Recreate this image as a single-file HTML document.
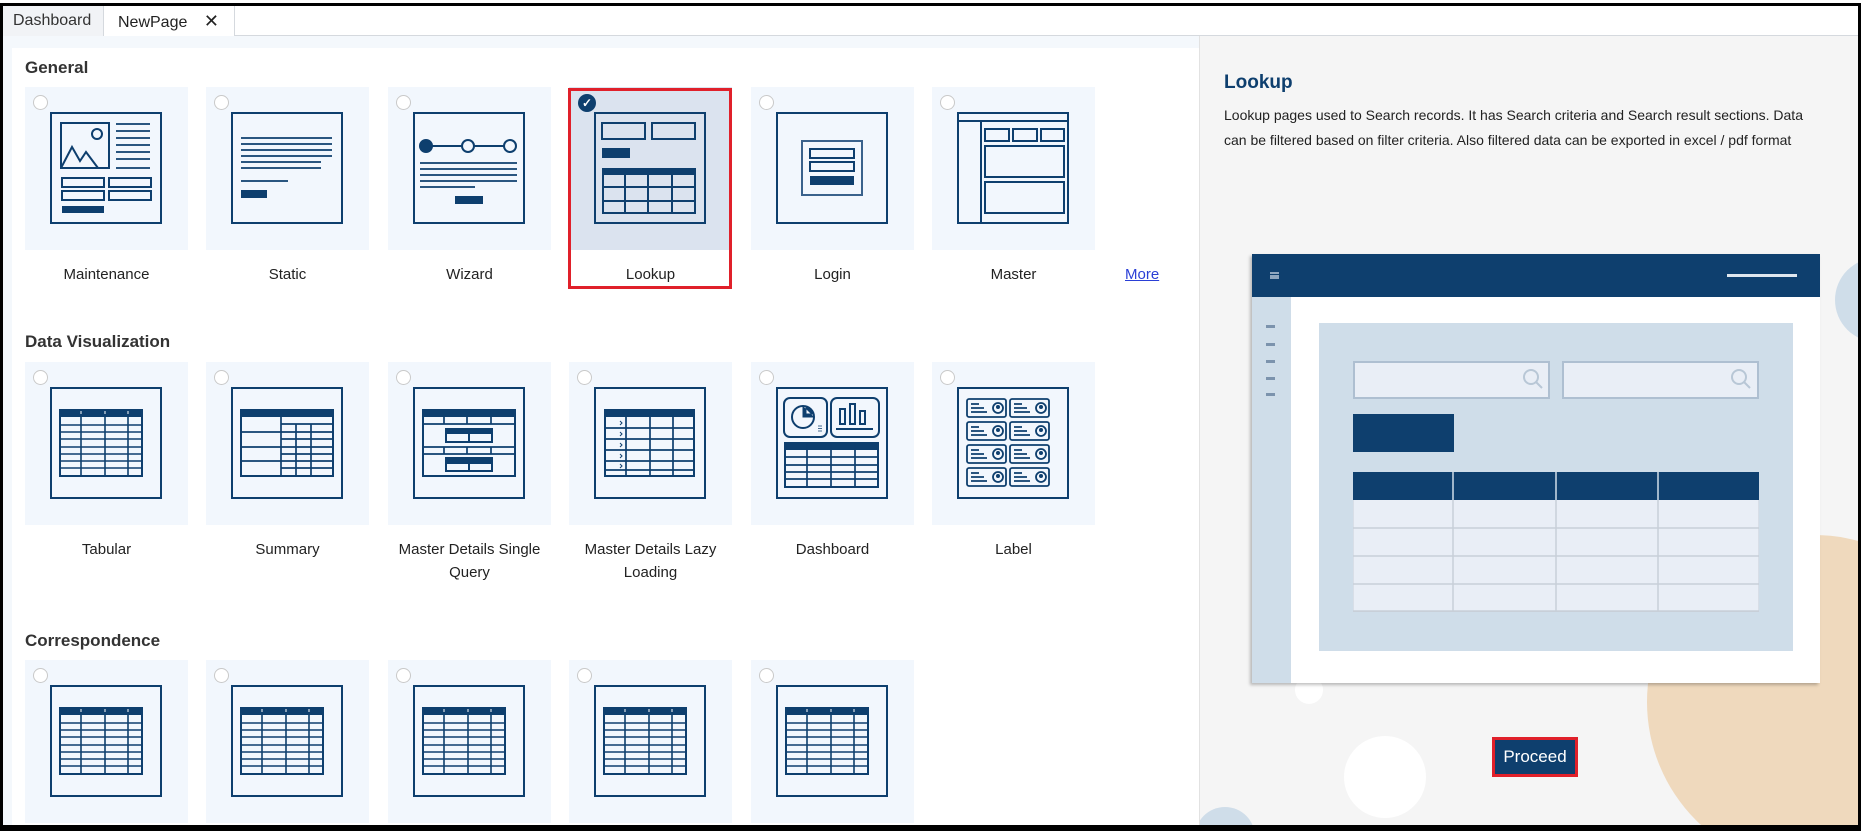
<!DOCTYPE html>
<html><head><meta charset="utf-8"><style>
*{box-sizing:border-box;margin:0;padding:0}
body{width:1861px;height:831px;overflow:hidden;background:#fff;font-family:"Liberation Sans",Arial,sans-serif;position:relative}
.frame{position:absolute;left:0;top:3px;width:1861px;height:828px;border:3px solid #000;border-bottom-width:6px}
.tabbar{position:absolute;left:3px;top:6px;width:1855px;height:30px;border-bottom:1px solid #d5d9de;background:#fff}
.tab{position:absolute;top:0;height:30px;font-size:16px;line-height:30px;color:#333}
.lp{position:absolute;left:3px;top:36px;width:1196px;height:789px;background:#f4f8fc}
.lpi{position:absolute;left:9px;top:12px;width:1187px;height:777px;background:#fff}
h3{position:absolute;left:25px;font-size:17px;font-weight:bold;color:#333}
.card{position:absolute;width:163px;height:163px;background:#f2f7fd}
.card.sel{background:#dbe3ef}
.card svg.ic{position:absolute;left:25px;top:25px}
.radio{position:absolute;left:8px;top:8px;width:15px;height:15px;border-radius:50%;border:1px solid #c9c9c9;background:#fff}
.lbl{position:absolute;width:163px;text-align:center;font-size:15px;color:#222;line-height:23px}
.rp{position:absolute;left:1199px;top:36px;width:659px;height:789px;background:#f5f5f5;border-left:1px solid #e2e2e2;overflow:hidden}
.circ{position:absolute;border-radius:50%}
</style></head><body>
<svg width="0" height="0" style="position:absolute">
<defs>
<symbol id="tab" viewBox="0 0 112 112">
<rect x="1" y="1" width="110" height="110" fill="none" stroke="#0e3f6e" stroke-width="2"/>
<rect x="10" y="23" width="82" height="66" fill="none" stroke="#0e3f6e" stroke-width="2"/>
<rect x="10" y="23" width="82" height="7" fill="#0e3f6e"/>
<g stroke="#0e3f6e" stroke-width="1.6"><path d="M31 23V89M55 23V89M78 23V89M10 38H92M10 45H92M10 52H92M10 60H92M10 67H92M10 74H92M10 81H92"/></g>
<path d="M31 24v3M55 24v3M78 24v3" stroke="#fff" stroke-width="1"/>
</symbol>
</defs></svg>

<div class="frame"></div>
<div class="tabbar">
 <div class="tab" style="left:0;width:101px;background:#f1f3f6;border-right:1px solid #d5d9de;padding-left:10px">Dashboard</div>
 <div class="tab" style="left:101px;width:131px;background:#fff;border-right:1px solid #d5d9de;padding-left:14px;color:#222">NewPage <span style="margin-left:12px;font-size:18px">✕</span></div>
</div>
<div class="lp"><div class="lpi"></div></div>

<h3 style="top:58px">General</h3>
<h3 style="top:332px">Data Visualization</h3>
<h3 style="top:631px">Correspondence</h3>

<!-- General row -->
<div class="card" style="left:25px;top:87px"><div class="radio"></div>
<svg class="ic" width="112" height="112" viewBox="0 0 112 112" fill="none" stroke="#0e3f6e" stroke-width="2">
<rect x="1" y="1" width="110" height="110"/><rect x="11" y="11" width="48" height="45"/>
<path d="M11 56L22 35L30 49L36 40L48 56"/><circle cx="47" cy="22" r="5"/>
<path d="M66 12H100M66 19H100M66 26H100M66 33H100M66 40H100M66 47H100M66 56H100" stroke-width="1.8"/>
<rect x="12" y="66" width="42" height="9"/><rect x="59" y="66" width="42" height="9"/><rect x="12" y="79" width="42" height="9"/><rect x="59" y="79" width="42" height="9"/>
<rect x="12" y="94" width="42" height="7" fill="#0e3f6e" stroke="none"/></svg></div>
<div class="lbl" style="left:25px;top:263px">Maintenance</div>

<div class="card" style="left:206px;top:87px"><div class="radio"></div>
<svg class="ic" width="112" height="112" viewBox="0 0 112 112" fill="none" stroke="#0e3f6e" stroke-width="2">
<rect x="1" y="1" width="110" height="110"/>
<path d="M10 26H101M10 32H101M10 38H101M10 44H101M10 50H90M10 56H90M10 69H57" stroke-width="1.8"/>
<rect x="10" y="78" width="26" height="8" fill="#0e3f6e" stroke="none"/></svg></div>
<div class="lbl" style="left:206px;top:263px">Static</div>

<div class="card" style="left:388px;top:87px"><div class="radio"></div>
<svg class="ic" width="112" height="112" viewBox="0 0 112 112" fill="none" stroke="#0e3f6e" stroke-width="2">
<rect x="1" y="1" width="110" height="110"/>
<path d="M19 34H49M61 34H91"/><circle cx="13" cy="34" r="6" fill="#0e3f6e"/><circle cx="55" cy="34" r="6"/><circle cx="97" cy="34" r="6"/>
<path d="M7 51H104M7 57H104M7 63H104M7 69H104M7 75H62" stroke-width="1.8"/>
<rect x="42" y="84" width="28" height="8" fill="#0e3f6e" stroke="none"/></svg></div>
<div class="lbl" style="left:388px;top:263px">Wizard</div>

<div class="card sel" style="left:569px;top:87px">
<div style="position:absolute;left:9px;top:7px;width:18px;height:18px;border-radius:50%;background:#0e3f6e;color:#fff;font-size:12px;line-height:18px;text-align:center;font-weight:bold">✓</div>
<svg class="ic" width="112" height="112" viewBox="0 0 112 112" fill="none" stroke="#0e3f6e" stroke-width="2">
<rect x="1" y="1" width="110" height="110"/><rect x="8" y="11" width="43" height="16"/><rect x="58" y="11" width="43" height="16"/>
<rect x="8" y="36" width="28" height="10" fill="#0e3f6e" stroke="none"/>
<rect x="9" y="57" width="92" height="44"/><rect x="9" y="56" width="92" height="7" fill="#0e3f6e" stroke="none"/>
<path d="M31 56V101M54 56V101M78 56V101M9 75H101M9 89H101"/></svg></div>
<div style="position:absolute;left:568px;top:88px;width:164px;height:201px;border:3px solid #e0202a"></div>
<div class="lbl" style="left:569px;top:263px">Lookup</div>

<div class="card" style="left:751px;top:87px"><div class="radio"></div>
<svg class="ic" width="112" height="112" viewBox="0 0 112 112" fill="none" stroke="#0e3f6e" stroke-width="2">
<rect x="1" y="1" width="110" height="110"/><rect x="26" y="29" width="60" height="54" stroke="#3a628c"/>
<rect x="34" y="37" width="44" height="9"/><rect x="34" y="50" width="44" height="9"/>
<rect x="34" y="64" width="44" height="9" fill="#0e3f6e" stroke="none"/></svg></div>
<div class="lbl" style="left:751px;top:263px">Login</div>

<div class="card" style="left:932px;top:87px"><div class="radio"></div>
<svg class="ic" width="112" height="112" viewBox="0 0 112 112" fill="none" stroke="#0e3f6e" stroke-width="2">
<rect x="1" y="1" width="110" height="110"/><path d="M1 9H111M24 9V111"/>
<rect x="28" y="17" width="24" height="12"/><rect x="56" y="17" width="24" height="12"/><rect x="84" y="17" width="23" height="12"/>
<rect x="28" y="34" width="79" height="31"/><rect x="28" y="70" width="79" height="31"/></svg></div>
<div class="lbl" style="left:932px;top:263px">Master</div>
<div style="position:absolute;left:1125px;top:266px;font-size:15px;color:#2a3fd6;text-decoration:underline;line-height:18px">More</div>

<!-- Data Visualization -->
<div class="card" style="left:25px;top:362px"><div class="radio"></div><svg class="ic" width="112" height="112"><use href="#tab"/></svg></div>
<div class="lbl" style="left:25px;top:538px">Tabular</div>

<div class="card" style="left:206px;top:362px"><div class="radio"></div>
<svg class="ic" width="112" height="112" viewBox="0 0 112 112" fill="none" stroke="#0e3f6e" stroke-width="2">
<rect x="1" y="1" width="110" height="110"/><rect x="10" y="23" width="92" height="66"/><rect x="10" y="23" width="92" height="7" fill="#0e3f6e" stroke="none"/>
<path d="M50 30V89M65 37V89M80 37V89M50 37H102M10 45H102M10 60H102M10 74H102M50 52H102M50 67H102M50 81H102" stroke-width="1.7"/></svg></div>
<div class="lbl" style="left:206px;top:538px">Summary</div>

<div class="card" style="left:388px;top:362px"><div class="radio"></div>
<svg class="ic" width="112" height="112" viewBox="0 0 112 112" fill="none" stroke="#0e3f6e" stroke-width="2">
<rect x="1" y="1" width="110" height="110"/><rect x="10" y="23" width="92" height="66"/><rect x="10" y="23" width="92" height="7" fill="#0e3f6e" stroke="none"/>
<path d="M10 37H102M31 30V37M54 30V37M78 30V37M10 60H102M10 67H102M31 60V67M54 60V67M78 60V67" stroke-width="1.7"/>
<rect x="33" y="42" width="46" height="13"/><rect x="33" y="42" width="46" height="5" fill="#0e3f6e" stroke="none"/><path d="M56 47V55"/>
<rect x="33" y="71" width="46" height="13"/><rect x="33" y="71" width="46" height="6" fill="#0e3f6e" stroke="none"/><path d="M56 77V84"/></svg></div>
<div class="lbl" style="left:378px;top:538px;width:183px">Master Details Single Query</div>

<div class="card" style="left:569px;top:362px"><div class="radio"></div>
<svg class="ic" width="112" height="112" viewBox="0 0 112 112" fill="none" stroke="#0e3f6e" stroke-width="2">
<rect x="1" y="1" width="110" height="110"/><rect x="11" y="23" width="89" height="66"/><rect x="11" y="23" width="89" height="7" fill="#0e3f6e" stroke="none"/>
<path d="M32 30V89M56 30V89M79 30V89M11 41H100M11 52H100M11 63H100M11 74H100M11 83H100" stroke-width="1.7"/>
<path d="M26 34l2 2-2 2M26 45l2 2-2 2M26 56l2 2-2 2M26 67l2 2-2 2M26 77l2 2-2 2" stroke-width="1"/></svg></div>
<div class="lbl" style="left:559px;top:538px;width:183px">Master Details Lazy Loading</div>

<div class="card" style="left:751px;top:362px"><div class="radio"></div>
<svg class="ic" width="112" height="112" viewBox="0 0 112 112" fill="none" stroke="#0e3f6e" stroke-width="2">
<rect x="1" y="1" width="110" height="110"/><rect x="8" y="11" width="43" height="39" rx="6"/><rect x="55" y="11" width="48" height="39" rx="6"/>
<circle cx="27" cy="30" r="11"/><path d="M27 19V30H38M30 19A11 11 0 0 1 38 27H30Z" fill="#0e3f6e" stroke-width="1"/>
<path d="M42 39H46M42 41.5H46M42 44H46" stroke-width="0.8"/>
<rect x="64" y="22" width="5" height="15"/><rect x="74" y="17" width="5" height="20"/><rect x="84" y="24" width="5" height="13"/><path d="M60 42H97"/>
<rect x="9" y="56" width="93" height="44"/><rect x="9" y="56" width="93" height="7" fill="#0e3f6e" stroke="none"/>
<path d="M31 56V100M55 56V100M79 56V100M9 70H102M9 78H102M9 85H102M9 92H102" stroke-width="1.7"/></svg></div>
<div class="lbl" style="left:751px;top:538px">Dashboard</div>

<div class="card" style="left:932px;top:362px"><div class="radio"></div>
<svg class="ic" width="112" height="112" viewBox="0 0 112 112" fill="none" stroke="#0e3f6e" stroke-width="1.8">
<rect x="1" y="1" width="110" height="110" stroke-width="2"/>
<g id="lc"><rect x="10" y="12" width="39" height="18" rx="2"/><path d="M14 17H22M14 21H27M14 25H30"/><circle cx="41" cy="21" r="5"/><circle cx="41" cy="20" r="2" fill="#0e3f6e" stroke="none"/></g>
<use href="#lc" x="43"/><use href="#lc" y="23"/><use href="#lc" x="43" y="23"/><use href="#lc" y="46"/><use href="#lc" x="43" y="46"/><use href="#lc" y="69"/><use href="#lc" x="43" y="69"/></svg></div>
<div class="lbl" style="left:932px;top:538px">Label</div>

<!-- Correspondence -->
<div class="card" style="left:25px;top:660px"><div class="radio"></div><svg class="ic" width="112" height="112"><use href="#tab"/></svg></div>
<div class="card" style="left:206px;top:660px"><div class="radio"></div><svg class="ic" width="112" height="112"><use href="#tab"/></svg></div>
<div class="card" style="left:388px;top:660px"><div class="radio"></div><svg class="ic" width="112" height="112"><use href="#tab"/></svg></div>
<div class="card" style="left:569px;top:660px"><div class="radio"></div><svg class="ic" width="112" height="112"><use href="#tab"/></svg></div>
<div class="card" style="left:751px;top:660px"><div class="radio"></div><svg class="ic" width="112" height="112"><use href="#tab"/></svg></div>

<!-- Right panel -->
<div class="rp">
 <div class="circ" style="left:447px;top:499px;width:334px;height:334px;background:#efd9bd"></div>
 <div class="circ" style="left:635px;top:222px;width:84px;height:84px;background:#cfdde9"></div>
 <div class="circ" style="left:144px;top:700px;width:82px;height:82px;background:#fff"></div>
 <div class="circ" style="left:95px;top:640px;width:28px;height:28px;background:#fff"></div>
 <div class="circ" style="left:-5px;top:771px;width:60px;height:60px;background:#cfdde9"></div>
 <div style="position:absolute;left:24px;top:36px;font-size:19px;font-weight:bold;color:#0e3f6e">Lookup</div>
 <div style="position:absolute;left:24px;top:67px;width:590px;font-size:14px;line-height:25px;color:#222">Lookup pages used to Search records. It has Search criteria and Search result sections. Data can be filtered based on filter criteria. Also filtered data can be exported in excel / pdf format</div>
 <!-- illustration -->
 <div style="position:absolute;left:52px;top:218px;width:568px;height:429px;background:#fff;box-shadow:-2px 2px 3px rgba(0,0,0,.25)">
  <div style="position:absolute;left:0;top:0;width:568px;height:43px;background:#0e3f6e"></div>
  <div style="position:absolute;left:18px;top:18px;width:9px;height:7px;border-top:2px solid #8ea6bf;border-bottom:2px solid #8ea6bf"></div>
  <div style="position:absolute;left:18px;top:21px;width:9px;height:2px;background:#8ea6bf"></div>
  <div style="position:absolute;left:475px;top:20px;width:70px;height:3px;background:#dfe7ef"></div>
  <div style="position:absolute;left:0;top:43px;width:39px;height:386px;background:#cfdde9"></div>
  <div style="position:absolute;left:14px;top:71px;width:9px;height:3px;background:#7c93ad;box-shadow:0 18px 0 #7c93ad,0 35px 0 #7c93ad,0 52px 0 #7c93ad,0 68px 0 #7c93ad"></div>
  <div style="position:absolute;left:67px;top:69px;width:474px;height:328px;background:#cfdde9"></div>
  <div style="position:absolute;left:101px;top:107px;width:197px;height:38px;background:#e9eef6;border:2px solid #aebfd1"></div>
  <div style="position:absolute;left:310px;top:107px;width:197px;height:38px;background:#e9eef6;border:2px solid #aebfd1"></div>
  <svg style="position:absolute;left:270px;top:114px" width="22" height="22" fill="none" stroke="#b8c7d6" stroke-width="2"><circle cx="9" cy="9" r="7"/><path d="M14 14l6 6"/></svg>
  <svg style="position:absolute;left:478px;top:114px" width="22" height="22" fill="none" stroke="#b8c7d6" stroke-width="2"><circle cx="9" cy="9" r="7"/><path d="M14 14l6 6"/></svg>
  <div style="position:absolute;left:101px;top:160px;width:101px;height:38px;background:#0e3f6e"></div>
  <svg style="position:absolute;left:101px;top:218px" width="406" height="140">
   <rect x="0" y="0" width="406" height="140" fill="#e9eef6" stroke="#c8cfd8"/>
   <rect x="0" y="0" width="406" height="28" fill="#0e3f6e"/>
   <g stroke="#c8cfd8" stroke-width="1.5"><path d="M0 56H406M0 84H406M0 112H406M0 139H406M100 28V140M203 28V140M305 28V140"/></g>
   <g stroke="#cfdde9" stroke-width="1.5"><path d="M100 0V28M203 0V28M305 0V28"/></g>
  </svg>
 </div>
 <div style="position:absolute;left:292px;top:701px;width:86px;height:40px;border:3px solid #e0202a;background:#0e3f6e;color:#fff;font-size:17px;text-align:center;line-height:34px">Proceed</div>
</div>
</body></html>
